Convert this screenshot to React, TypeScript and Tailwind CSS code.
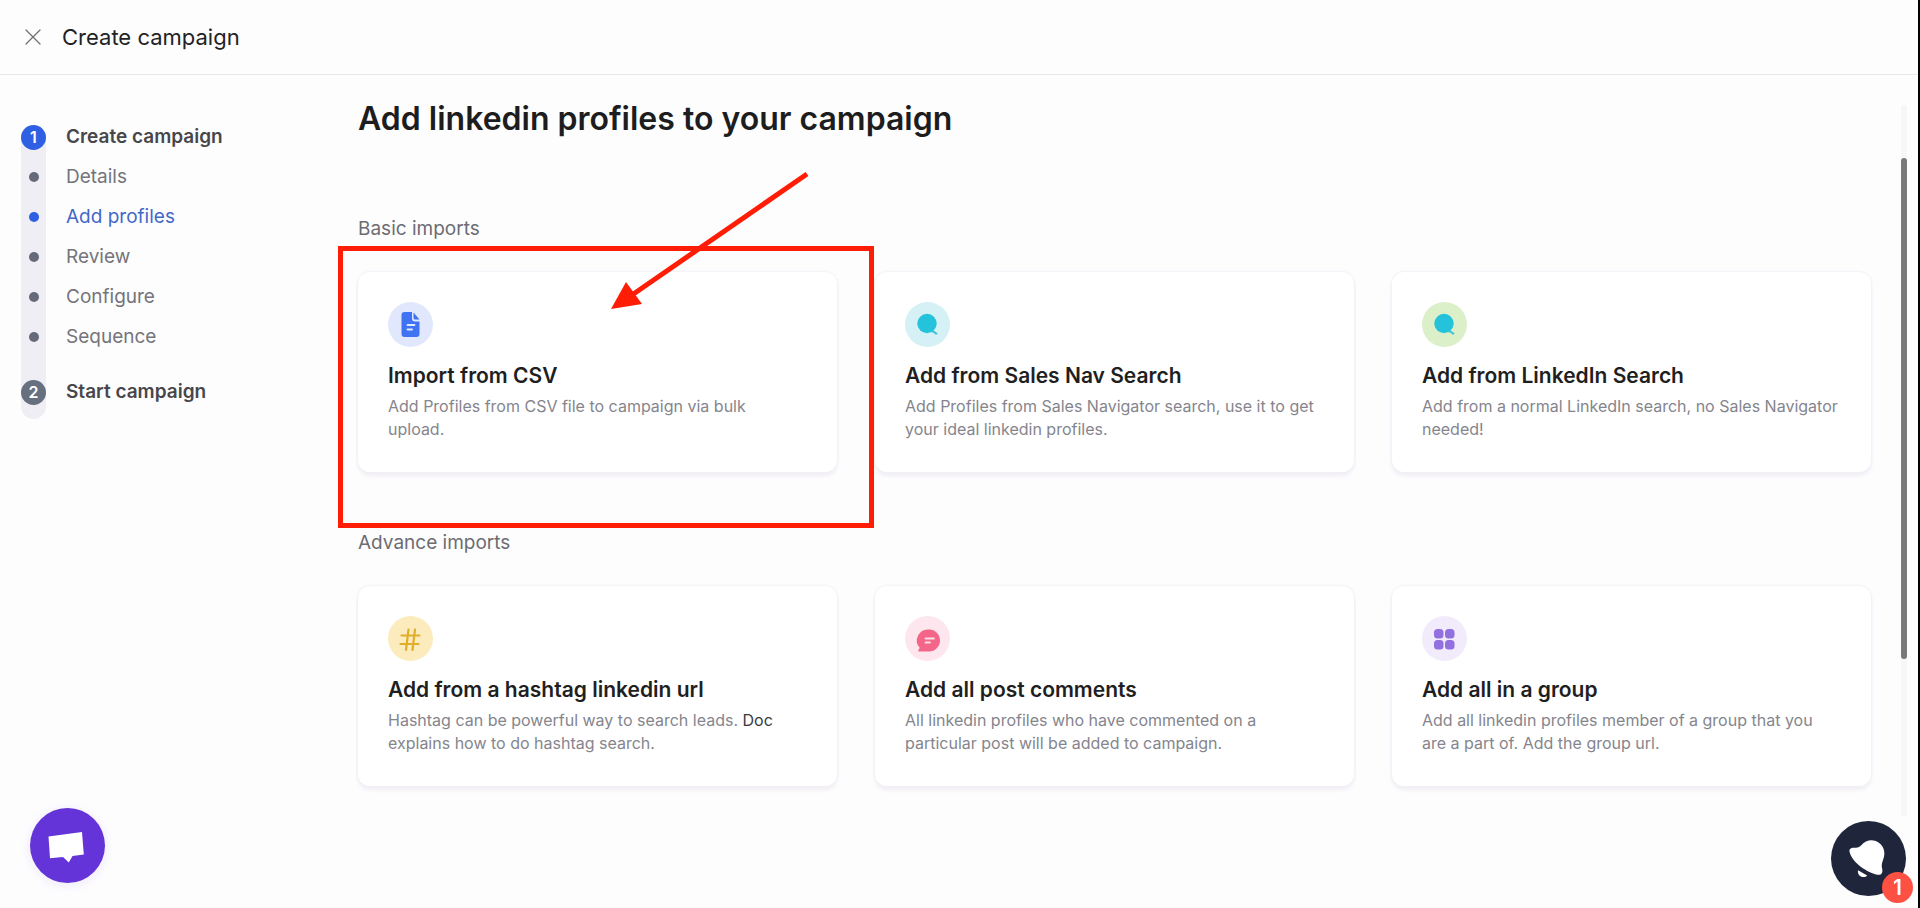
import type { ReactNode } from "react";
import clsx from "clsx";

type ImportOption = {
  title: string;
  description: ReactNode;
  icon: ReactNode;
  tint: string;
  highlighted?: boolean;
};

function CloseIcon() {
  return (
    <svg viewBox="0 0 16 16" className="size-4" fill="none" stroke="#6f6f73" strokeWidth="1.3" strokeLinecap="round">
      <path d="M1 1l14 14M15 1L1 15" />
    </svg>
  );
}

function FileIcon() {
  return (
    <svg viewBox="0 0 45 45" className="size-full">
      <path d="M16.5 10H24v6.5a3 3 0 0 0 3 3h4.500v12.500a3 3 0 0 1-3 3h-12a3 3 0 0 1-3-3V13a3 3 0 0 1 3-3z" fill="#3f73f4" />
      <path d="M25.500 10.500l6 7H27a1.500 1.500 0 0 1-1.500-1.500z" fill="#3f73f4" />
      <path d="M19.500 23h7M19.500 27.500h4.500" stroke="#e2e9fd" strokeWidth="1.800" strokeLinecap="round" />
    </svg>
  );
}

function SearchIcon() {
  return (
    <svg viewBox="0 0 45 45" className="size-full">
      <circle cx="22" cy="21.500" r="9.700" fill="#25c2dc" />
      <path d="M27 29.500c1.500-.3 2.500.2 3 1.200.3.800.8 1 1.500.8" fill="none" stroke="#3fc3d8" strokeWidth="2" strokeLinecap="round" />
    </svg>
  );
}

function HashIcon() {
  return (
    <svg viewBox="0 0 45 45" className="size-full" fill="none" stroke="#dfae2a" strokeWidth="2.200" strokeLinecap="round">
      <path d="M20.500 13.500l-2.500 20.500M27 13.500l-2.500 20.500M13.500 19.500h18M12.500 28h18" />
    </svg>
  );
}

function CommentIcon() {
  return (
    <svg viewBox="0 0 45 45" className="size-full">
      <path d="M24 13.500a11 11 0 1 1 0 22H14c-.8 0-1-.7-.6-1.300l1.300-2.400A11 11 0 0 1 24 13.500z" fill="#f4658a" />
      <path d="M20.500 22.500h8.500M20.500 26.500h4.500" stroke="#fde0e8" strokeWidth="1.800" strokeLinecap="round" />
    </svg>
  );
}

function GroupIcon() {
  return (
    <svg viewBox="0 0 45 45" className="size-full" fill="#9170e0">
      <rect x="12" y="13" width="9.500" height="9.500" rx="3.500" />
      <rect x="23" y="13" width="9.500" height="9.500" rx="3.500" />
      <rect x="12" y="24" width="9.500" height="9.500" rx="3.500" />
      <rect x="23" y="24" width="9.500" height="9.500" rx="3.500" />
    </svg>
  );
}

const steps = ["Details", "Add profiles", "Review", "Configure", "Sequence"];
const currentStep = "Add profiles";

const basicImports: ImportOption[] = [
  {
    title: "Import from CSV",
    description: (
      <>
        Add Profiles from CSV file to campaign via bulk
        <br />
        upload.
      </>
    ),
    icon: <FileIcon />,
    tint: "bg-[#e1e8fd]",
    highlighted: true,
  },
  {
    title: "Add from Sales Nav Search",
    description: "Add Profiles from Sales Navigator search, use it to get your ideal linkedin profiles.",
    icon: <SearchIcon />,
    tint: "bg-[#d5f1f6]",
  },
  {
    title: "Add from LinkedIn Search",
    description: "Add from a normal LinkedIn search, no Sales Navigator needed!",
    icon: <SearchIcon />,
    tint: "bg-[#dbf0c8]",
  },
];

const advanceImports: ImportOption[] = [
  {
    title: "Add from a hashtag linkedin url",
    description: (
      <>
        Hashtag can be powerful way to search leads.{" "}
        <a href="#doc" className="text-[#3a3a3e]">
          Doc
        </a>{" "}
        explains how to do hashtag search.
      </>
    ),
    icon: <HashIcon />,
    tint: "bg-[#fcebbd]",
  },
  {
    title: "Add all post comments",
    description: "All linkedin profiles who have commented on a particular post will be added to campaign.",
    icon: <CommentIcon />,
    tint: "bg-[#fde6ed]",
  },
  {
    title: "Add all in a group",
    description: (
      <>
        Add all linkedin profiles member of a group that you
        <br />
        are a part of. Add the group url.
      </>
    ),
    icon: <GroupIcon />,
    tint: "bg-[#f1ebfc]",
  },
];

function StepNumber({ value, active }: { value: number; active?: boolean }) {
  return (
    <span
      className={clsx(
        "flex size-[25px] shrink-0 items-center justify-center rounded-full text-base font-semibold text-white",
        active ? "bg-[#2f5fe3]" : "bg-[#66707f]"
      )}
    >
      {value}
    </span>
  );
}

function Sidebar() {
  return (
    <aside className="w-[358px] shrink-0 pt-[42px] pl-[21px]">
      <nav className="relative isolate before:absolute before:top-2 before:-bottom-[7px] before:left-0 before:-z-10 before:w-[25px] before:rounded-full before:bg-[#eeeef4]">
        <div className="flex h-10 items-center gap-5">
          <StepNumber value={1} active />
          <span className="text-[19px] font-semibold text-[#47474b]">Create campaign</span>
        </div>
        <ul>
          {steps.map((step) => (
            <li key={step} className="flex h-10 items-center gap-5">
              <span className="flex w-[25px] justify-center">
                <span className={clsx("size-[10px] rounded-full", step === currentStep ? "bg-[#2f5fe3]" : "bg-[#66697a]")} />
              </span>
              <a
                href="#step"
                className={clsx("text-[19px]", step === currentStep ? "text-[#4468c8]" : "text-[#74747a]")}
              >
                {step}
              </a>
            </li>
          ))}
        </ul>
        <div className="mt-[15px] flex h-10 items-center gap-5">
          <StepNumber value={2} />
          <span className="text-[19px] font-semibold text-[#47474b]">Start campaign</span>
        </div>
      </nav>
    </aside>
  );
}

function ImportCard({ title, description, icon, tint, highlighted }: ImportOption) {
  return (
    <article
      className={clsx(
        "relative min-h-[200px] rounded-xl bg-white px-[30px] pt-[30px] pb-6 shadow-[0_0_2px_1px_#f3f0f6,0_4px_4px_#f0edf3]",
        highlighted && "z-10"
      )}
    >
      <div className={clsx("size-[45px] rounded-full", tint)}>{icon}</div>
      <h3 className="mt-4 text-[21px] leading-[26px] font-semibold text-[#1f1f22]">
        <button type="button">{title}</button>
      </h3>
      <p className="mt-[6px] text-base leading-[23px] text-[#85858d]">{description}</p>
      {highlighted && (
        <>
          <div className="pointer-events-none absolute -top-[26px] -right-[37px] -bottom-[56px] -left-5 border-[5px] border-[#ff1d05]" />
          <svg
            viewBox="0 0 200 140"
            className="pointer-events-none absolute -top-[101px] left-[252px] h-[140px] w-[200px]"
            aria-hidden="true"
          >
            <path d="M197 3L22 124" stroke="#ff1d05" strokeWidth="5" />
            <path d="M1 138L16 111L32 133z" fill="#ff1d05" />
          </svg>
        </>
      )}
    </article>
  );
}

function ImportSection({ heading, options }: { heading: string; options: ImportOption[] }) {
  return (
    <section>
      <h2 className="text-[19px] leading-7 text-[#6c6c72]">{heading}</h2>
      <div className="mt-[29px] grid grid-cols-3 gap-[38px]">
        {options.map((option) => (
          <ImportCard key={option.title} {...option} />
        ))}
      </div>
    </section>
  );
}

export default function App() {
  return (
    <div className="flex min-h-screen flex-col border-r-2 border-black bg-[#fdfdfe] font-['Inter','Open_Sans',sans-serif]">
      <header className="flex h-[75px] shrink-0 items-center gap-[21px] border-b border-[#e9e9ec] pl-[25px]">
        <button type="button" aria-label="Close">
          <CloseIcon />
        </button>
        <h1 className="text-[22px] text-[#222225]">Create campaign</h1>
      </header>

      <div className="flex flex-1">
        <Sidebar />

        <main className="min-w-0 flex-1 pt-6 pr-[30px]">
          <h2 className="text-[32px] leading-10 font-semibold text-[#1d1d20]">Add linkedin profiles to your campaign</h2>
          <div className="mt-[76px] flex flex-col gap-[57px]">
            <ImportSection heading="Basic imports" options={basicImports} />
            <ImportSection heading="Advance imports" options={advanceImports} />
          </div>
        </main>

        <div className="mt-[30px] mr-[11px] mb-[92px] flex w-[6px] shrink-0 flex-col bg-[#f7f6f9]">
          <div className="grow-[53]" />
          <div className="grow-[501] rounded-full bg-[#79797c]" />
          <div className="grow-[157]" />
        </div>
      </div>

      <button
        type="button"
        aria-label="Open chat"
        className="fixed bottom-[25px] left-[30px] size-[75px] rounded-full bg-[#6434d8] shadow-[0_2px_12px_#eee8f8]"
      >
        <svg viewBox="0 0 75 75" className="size-full">
          <path d="M18.500 28.500L52 24l1.800 22.500L42.500 48l-3.700 6.500L33 49l-13 1.200z" fill="#fff" />
        </svg>
      </button>

      <button
        type="button"
        aria-label="Notifications, 1 new"
        className="fixed right-[14px] bottom-3 size-[75px] rounded-full bg-[#1f253b]"
      >
        <svg viewBox="0 0 75 75" className="size-full" fill="#fff">
          <path d="M18.500 30.500c-.5-3 2-4 5-3.800 3.500.3 5-.5 7-2.700 4-4.500 11-6.500 17-2.500 6.500 4.500 7 11.500 4.500 17.500-1.500 4-1.500 6-.8 9 .8 3.500-.7 6.300-4.200 5.800-10-1.500-26.500-12.500-28.500-23.300z" />
          <path d="M27 49.200l9.200 5.300c-1.500 1.800-4.500 2-6.700.7-2-1.200-3-3.700-2.500-6z" />
        </svg>
        <span className="absolute -right-[7px] -bottom-[7px] flex size-[31px] items-center justify-center rounded-full bg-[#fd5143] text-[21px] font-semibold text-white">
          1
        </span>
      </button>
    </div>
  );
}
